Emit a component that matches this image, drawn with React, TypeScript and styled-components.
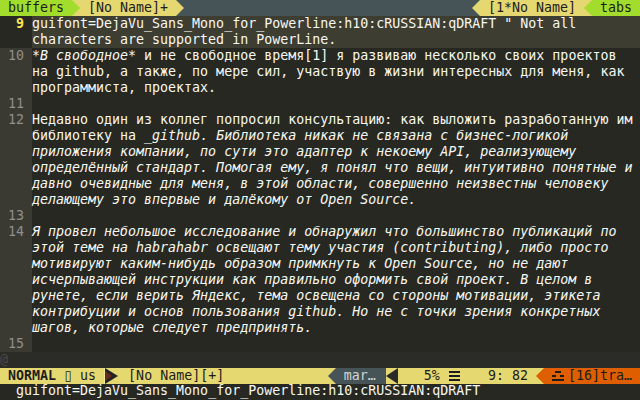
import styled, { createGlobalStyle } from "styled-components";

const GlobalStyle = createGlobalStyle`
  html, body {
    margin: 0;
    padding: 0;
    background: #272822;
  }
  body {
    font-family: "DejaVu Sans Mono", "Liberation Mono", monospace;
    font-size: 13.3px;
    line-height: 16px;
  }
`;

const GREEN = "#a2dc2c";
const YELLOW = "#e6d870";
const SLATE = "#465457";
const ORANGE = "#df5f00";
const INK = "#1c1c1c";

const Screen = styled.div`
  width: 640px;
  height: 400px;
  display: flex;
  flex-direction: column;
  overflow: hidden;
  color: #f8f8f2;
`;

const Bar = styled.div<{ $bg: string }>`
  display: flex;
  height: 16px;
  background: ${(p) => p.$bg};
  white-space: pre;
  flex-shrink: 0;
`;

const Seg = styled.div<{ $bg: string; $fg?: string }>`
  background: ${(p) => p.$bg};
  color: ${(p) => p.$fg || INK};
  height: 16px;
  line-height: 15px;
  white-space: pre;
`;

const Fill = styled.div`
  flex: 1;
`;

const ArrowBox = styled.div<{ $bg: string; $w: number }>`
  width: ${(p) => p.$w}px;
  height: 16px;
  background: ${(p) => p.$bg};
  flex-shrink: 0;
  svg {
    display: block;
  }
`;

function Arrow({ dir, fill, bg }: { dir: "r" | "l"; fill: string; bg: string }) {
  return (
    <ArrowBox $bg={bg} $w={8}>
      <svg width="8" height="16" viewBox="0 0 8 16">
        <polygon points={dir === "r" ? "0,0 8,8 0,16" : "8,0 0,8 8,16"} fill={fill} />
      </svg>
    </ArrowBox>
  );
}

// block flow so row backgrounds sit under every row's text
const Editor = styled.div`
  flex: 1;
  display: block;
`;

const Row = styled.div<{ $cursor?: boolean }>`
  display: flex;
  height: 16px;
  line-height: 15px;
  white-space: pre;
  background: ${(p) => (p.$cursor ? "#3e3d32" : "#272822")};
`;

const Gutter = styled.div<{ $cursor?: boolean }>`
  width: 24px;
  padding-right: 8px;
  text-align: right;
  flex-shrink: 0;
  background: ${(p) => (p.$cursor ? "#272822" : "#3b3a32")};
  color: ${(p) => (p.$cursor ? "#fce94f" : "#8f908a")};
  font-weight: ${(p) => (p.$cursor ? "bold" : "normal")};
`;

const Line = styled.div`
  flex: 1;
`;

const Em = styled.span`
  font-style: italic;
`;

const LastRow = styled.div`
  height: 16px;
  line-height: 15px;
  background: #2b2b28;
  color: #4a4a46;
`;

const CmdLine = styled.div`
  height: 16px;
  line-height: 14px;
  padding-left: 16px;
  white-space: pre;
  background: #272822;
  color: #f8f8f2;
  flex-shrink: 0;
`;

const Glyph = styled.span`
  font-family: "DejaVu Sans", "DejaVu Sans Mono", sans-serif;
  display: inline-block;
  width: 8px;
  text-align: center;
  vertical-align: top;
`;

const Icon = styled.svg`
  display: inline-block;
  vertical-align: top;
`;

function LinesIcon() {
  return (
    <Icon width="16" height="16" viewBox="0 0 16 16">
      <rect x="1" y="3" width="11" height="2" fill={INK} />
      <rect x="1" y="7" width="11" height="2" fill={INK} />
      <rect x="1" y="11" width="11" height="2" fill={INK} />
    </Icon>
  );
}

function TrigramIcon() {
  return (
    <Icon width="16" height="16" viewBox="0 0 16 16">
      <rect x="3" y="3" width="6" height="2" fill={INK} />
      <rect x="0" y="7" width="4" height="2" fill={INK} />
      <rect x="8" y="7" width="4" height="2" fill={INK} />
      <rect x="0" y="11" width="12" height="2" fill={INK} />
    </Icon>
  );
}

type Part = string | { i: string };
type RowData = { n?: string; cur?: boolean; parts: Part[] };

const rows: RowData[] = [
  { n: "9", cur: true, parts: ['guifont=DejaVu_Sans_Mono_for_Powerline:h10:cRUSSIAN:qDRAFT " Not all'] },
  { cur: true, parts: ["characters are supported in PowerLine."] },
  { n: "10", parts: ["*", { i: "В свободное" }, "* и не свободное время[1] я развиваю несколько своих проектов"] },
  { parts: ["на github, а также, по мере сил, участвую в жизни интересных для меня, как"] },
  { parts: ["программиста, проектах."] },
  { n: "11", parts: [""] },
  { n: "12", parts: ["Недавно один из коллег попросил консультацию: как выложить разработанную им"] },
  { parts: ["библиотеку на _", { i: "github. Библиотека никак не связана с бизнес-логикой" }] },
  { parts: [{ i: "приложения компании, по сути это адаптер к некоему API, реализующему" }] },
  { parts: [{ i: "определённый стандарт. Помогая ему, я понял что вещи, интуитивно понятные и" }] },
  { parts: [{ i: "давно очевидные для меня, в этой области, совершенно неизвестны человеку" }] },
  { parts: [{ i: "делающему это впервые и далёкому от Open Source." }] },
  { n: "13", parts: [""] },
  { n: "14", parts: [{ i: "Я провел небольшое исследование и обнаружил что большинство публикаций по" }] },
  { parts: [{ i: "этой теме на habrahabr освещают тему участия (contributing), либо просто" }] },
  { parts: [{ i: "мотивируют каким-нибудь образом примкнуть к Open Source, но не дают" }] },
  { parts: [{ i: "исчерпывающей инструкции как правильно оформить свой проект. В целом в" }] },
  { parts: [{ i: "рунете, если верить Яндекс, тема освещена со стороны мотивации, этикета" }] },
  { parts: [{ i: "контрибуции и основ пользования github. Но не с точки зрения конкретных" }] },
  { parts: [{ i: "шагов, которые следует предпринять." }] },
  { n: "15", parts: [""] },
];

export default function App() {
  return (
    <Screen>
      <GlobalStyle />
      <Bar $bg={SLATE}>
        <Seg $bg={GREEN}> buffers </Seg>
        <Arrow dir="r" fill={GREEN} bg={YELLOW} />
        <Seg $bg={YELLOW}> [No Name]+ </Seg>
        <Arrow dir="r" fill={YELLOW} bg={SLATE} />
        <Fill />
        <Arrow dir="l" fill={YELLOW} bg={SLATE} />
        <Seg $bg={YELLOW}> [1*No Name] </Seg>
        <Arrow dir="l" fill={GREEN} bg={YELLOW} />
        <Seg $bg={GREEN}> tabs </Seg>
      </Bar>

      <Editor>
        {rows.map((r, k) => (
          <Row key={k} $cursor={r.cur}>
            <Gutter $cursor={r.cur}>{r.n || ""}</Gutter>
            <Line>
              {r.parts.map((p, j) => (typeof p === "string" ? p : <Em key={j}>{p.i}</Em>))}
            </Line>
          </Row>
        ))}
        <LastRow>@</LastRow>
      </Editor>

      <Bar $bg={YELLOW}>
        <Seg $bg={YELLOW}>
          <b> NORMAL</b> <Glyph>▯</Glyph> us{" "}
        </Seg>
        <ArrowBox $bg={YELLOW} $w={16}>
          <svg width="16" height="16" viewBox="0 0 16 16">
            <rect x="0" y="0" width="1" height="16" fill="#f4eaa0" />
            <polygon points="1,0 14,8 1,16" fill="#232323" />
            <polygon points="1,3 8,8 1,13" fill="#6a2a18" />
          </svg>
        </ArrowBox>
        <Seg $bg={YELLOW}> [No Name][+]</Seg>
        <Fill />
        <Arrow dir="l" fill={SLATE} bg={YELLOW} />
        <Seg $bg={SLATE} $fg="#d0d6d8"> mar… </Seg>
        <ArrowBox $bg={YELLOW} $w={16}>
          <svg width="16" height="16" viewBox="0 0 16 16">
            <polygon points="0,0 2,0 2,16 0,16" fill={SLATE} />
            <polygon points="2,8 14,0 14,16" fill="#2a2a2a" />
          </svg>
        </ArrowBox>
        <Seg $bg={YELLOW}>
          {"   5% "}
          <LinesIcon />
          {"   9: 82 "}
        </Seg>
        <Arrow dir="l" fill={ORANGE} bg={YELLOW} />
        <Seg $bg={ORANGE}>
          {" "}
          <TrigramIcon />
          {"[16]tra… "}
        </Seg>
      </Bar>

      <CmdLine>guifont=DejaVu_Sans_Mono_for_Powerline:h10:cRUSSIAN:qDRAFT</CmdLine>
    </Screen>
  );
}
